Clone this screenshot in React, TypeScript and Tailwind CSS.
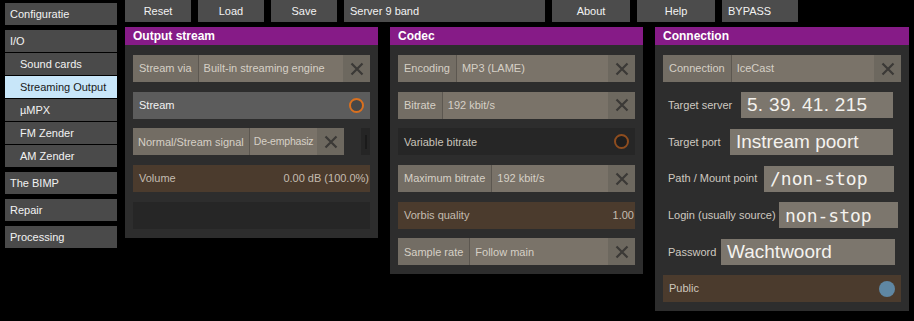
import React from "react";

const ui = { fontFamily: '"Liberation Sans", Arial, sans-serif' };

function CloseX() {
  return (
    <svg width="14" height="14" viewBox="0 0 14 14">
      <path d="M1.5 1.5 L12.5 12.5 M12.5 1.5 L1.5 12.5" stroke="#3b3936" strokeWidth="2.2" />
    </svg>
  );
}

function SideItem({ label, sub, active }: { label: string; sub?: boolean; active?: boolean }) {
  return (
    <div
      className={`h-[22px] flex items-center text-[11px] ${sub ? "pl-[15px]" : "pl-[5px]"} ${
        active ? "bg-[#c8e6f9] text-[#1a1a1a]" : "bg-[#4a4a4a] text-[#f2f2f2]"
      }`}
    >
      {label}
    </div>
  );
}

function TopButton({ label, w, left }: { label: string; w: string; left?: boolean }) {
  return (
    <div
      className={`${w} h-[22px] bg-[#4c4c4c] text-[#f2f2f2] text-[11px] flex items-center ${
        left ? "pl-[6px]" : "justify-center"
      }`}
    >
      {label}
    </div>
  );
}

function Dropdown({ label, value, w = "w-full" }: { label: string; value: string; w?: string }) {
  return (
    <div className={`${w} h-[27px] flex bg-[#7a7369] text-[11px] text-[#d6d0c6]`}>
      <div className="h-full flex items-center px-[6px] bg-[#736d64] border-r border-[#5c5750] whitespace-nowrap">
        {label}
      </div>
      <div className="flex-1 min-w-0 h-full flex items-center pl-[5px] whitespace-nowrap">{value}</div>
      <div className="w-[27px] shrink-0 h-full flex items-center justify-center bg-[#6d685f]">
        <CloseX />
      </div>
    </div>
  );
}

function Toggle({ label, bg, ring, fill, text }: { label: string; bg: string; ring: string; fill: string; text: string }) {
  return (
    <div className={`h-[27px] flex items-center justify-between pl-[6px] pr-[6px] text-[11px] ${bg} ${text}`}>
      <span>{label}</span>
      <span className={`w-[15px] h-[15px] rounded-full border-2 ${ring} ${fill}`} />
    </div>
  );
}

function Slider({ label, value }: { label: string; value: string }) {
  return (
    <div className="h-[27px] flex items-center justify-between pl-[6px] pr-[1px] bg-[#4b3b2d] text-[11px] text-[#c4bcb0]">
      <span>{label}</span>
      <span>{value}</span>
    </div>
  );
}

function TextField({
  label,
  value,
  w,
  mr,
  mono,
  spaced,
}: {
  label: string;
  value: string;
  w: string;
  mr: string;
  mono?: boolean;
  spaced?: boolean;
}) {
  return (
    <div className="h-[27px] flex items-center justify-between pl-[5px]">
      <span className="text-[11px] text-[#cfc9c0] whitespace-nowrap">{label}</span>
      <div
        className={`${w} ${mr} h-[26px] bg-[#7c766d] text-[#f4f2ee] flex items-center pl-[6px] whitespace-nowrap ${
          spaced ? "text-[19px] tracking-[0.3px] font-light" : mono ? "text-[18px]" : "text-[19px]"
        }`}
        style={mono ? { fontFamily: '"DejaVu Sans Mono", monospace' } : undefined}
      >
        {value}
      </div>
    </div>
  );
}

function Panel({ title, children }: { title: string; children: React.ReactNode }) {
  return (
    <div className="bg-[#2d2d2d]">
      <div className="h-[18px] bg-[#861b87] text-white text-[12px] font-bold flex items-center pl-[8px]">{title}</div>
      <div className="flex flex-col gap-[9.7px] px-[8px] pt-[10px] pb-[9px]">{children}</div>
    </div>
  );
}

export default function App() {
  return (
    <div className="w-[914px] h-[321px] bg-black flex overflow-hidden" style={ui}>
      <div className="w-[112px] ml-[5px] mt-[3px] flex flex-col">
        <SideItem label="Configuratie" />
        <div className="h-[5px]" />
        <div className="flex flex-col gap-[1px]">
          <SideItem label="I/O" />
          <SideItem label="Sound cards" sub />
          <SideItem label="Streaming Output" sub active />
          <SideItem label="µMPX" sub />
          <SideItem label="FM Zender" sub />
          <SideItem label="AM Zender" sub />
        </div>
        <div className="flex flex-col gap-[5px] mt-[5px]">
          <SideItem label="The BIMP" />
          <SideItem label="Repair" />
          <SideItem label="Processing" />
        </div>
      </div>

      <div className="ml-[8px] flex flex-col">
        <div className="flex gap-[7px]">
          <TopButton label="Reset" w="w-[66px]" />
          <TopButton label="Load" w="w-[66px]" />
          <TopButton label="Save" w="w-[66px]" />
          <TopButton label="Server 9 band" w="w-[201px]" left />
          <TopButton label="About" w="w-[78px]" />
          <TopButton label="Help" w="w-[78px]" />
          <TopButton label="BYPASS" w="w-[76px]" left />
        </div>

        <div className="flex gap-[12px] mt-[5px] items-start">
          <div className="w-[253px]">
            <Panel title="Output stream">
              <Dropdown label="Stream via" value="Built-in streaming engine" />
              <Toggle label="Stream" bg="bg-[#5c5c5c]" ring="border-[#d9701f]" fill="bg-[#474747]" text="text-[#f2f2f2]" />
              <div className="flex h-[27px]">
                <div className="w-[211px] h-[27px] flex bg-[#7a7369] text-[11px] text-[#d6d0c6]">
                  <div className="h-full flex items-center px-[5px] bg-[#736d64] border-r border-[#5c5750] whitespace-nowrap">
                    Normal/Stream signal
                  </div>
                  <div className="flex-1 h-full flex items-center pl-[4px] whitespace-nowrap text-[10.5px] tracking-[-0.2px]">
                    De-emphasiz
                  </div>
                  <div className="w-[27px] shrink-0 h-full flex items-center justify-center bg-[#6d685f]">
                    <CloseX />
                  </div>
                </div>
                <div className="ml-[17px] w-[9px] h-full bg-[#252525] flex items-center justify-center">
                  <div className="w-[2px] h-[14px] bg-[#1a1a1a]" />
                </div>
              </div>
              <Slider label="Volume" value="0.00 dB (100.0%)" />
              <div className="h-[27px] bg-[#262626]" />
            </Panel>
          </div>

          <div className="w-[253px]">
            <Panel title="Codec">
              <Dropdown label="Encoding" value="MP3 (LAME)" />
              <Dropdown label="Bitrate" value="192 kbit/s" />
              <Toggle
                label="Variable bitrate"
                bg="bg-[#262626]"
                ring="border-[#8e4d1f]"
                fill="bg-[#1e1e1e]"
                text="text-[#c9c3ba]"
              />
              <Dropdown label="Maximum bitrate" value="192 kbit/s" />
              <Slider label="Vorbis quality" value="1.00" />
              <Dropdown label="Sample rate" value="Follow main" />
            </Panel>
          </div>

          <div className="w-[254px]">
            <Panel title="Connection">
              <Dropdown label="Connection" value="IceCast" />
              <TextField label="Target server" value="5. 39. 41. 215" w="w-[152px]" mr="mr-[8px]" spaced />
              <TextField label="Target port" value="Instream poort" w="w-[163px]" mr="mr-[8px]" />
              <TextField label="Path / Mount point" value="/non-stop" w="w-[130px]" mr="mr-[7px]" mono />
              <TextField label="Login (usually source)" value="non-stop" w="w-[119px]" mr="mr-[3px]" mono />
              <TextField label="Password" value="Wachtwoord" w="w-[174px]" mr="mr-[6px]" />
              <div className="h-[27px] flex items-center justify-between pl-[6px] pr-[6px] bg-[#4b3b2d] text-[11px] text-[#cfc7bc]">
                <span>Public</span>
                <span className="w-[16px] h-[16px] rounded-full bg-[#5f87a3]" />
              </div>
            </Panel>
          </div>
        </div>
      </div>
    </div>
  );
}
